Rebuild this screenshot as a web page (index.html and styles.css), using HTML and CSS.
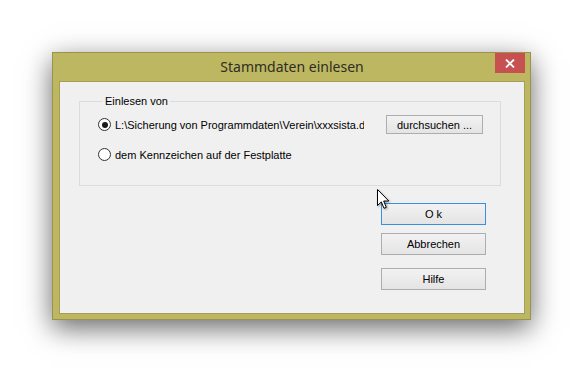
FILE: index.html
```html
<!DOCTYPE html>
<html lang="de">
<head>
  <meta charset="UTF-8" />
  <title>Stammdaten einlesen</title>
  <link rel="stylesheet" href="styles.css">
</head>
<body>
  <div class="window">
    <div class="titlebar">
      <span class="title">Stammdaten einlesen</span>
      <button class="btn-close" type="button">
        <svg width="10" height="9" viewBox="0 0 10 9">
          <path d="M1 0.5 L9 8.5 M9 0.5 L1 8.5" stroke="#fff" stroke-width="1.8" fill="none"/>
        </svg>
      </button>
    </div>
    <div class="client">
      <fieldset class="gruppe">
        <legend>Einlesen von</legend>
        <div class="zeile">
          <span class="radio checked"></span>
          <span class="pfad">L:\Sicherung von Programmdaten\Verein\xxxsista.dat</span>
          <button class="btn btn-suchen" type="button">durchsuchen ...</button>
        </div>
        <div class="zeile zeile-2">
          <span class="radio"></span>
          <span class="text">dem Kennzeichen auf der Festplatte</span>
        </div>
      </fieldset>
      <div class="aktionen">
        <button class="btn btn-ok" type="button">O k</button>
        <button class="btn" type="button">Abbrechen</button>
        <button class="btn btn-hilfe" type="button">Hilfe</button>
      </div>
    </div>
  </div>

  <svg class="cursor" width="13" height="21" viewBox="0 0 13 21">
    <path d="M0.5 0.5 L0.5 16.5 L4.3 12.9 L7 19.3 L9.3 18.3 L6.7 12 L11.8 12 Z" fill="#fff" stroke="#000" stroke-width="1"/>
  </svg>
</body>
</html>
```

FILE: styles.css
```css
* { box-sizing: border-box; }

body {
  margin: 0;
  background: #fff;
  font-family: 'Liberation Sans', Arial, sans-serif;
  font-size: 11px;
  color: #000;
  position: relative;
  min-height: 373px;
  overflow: hidden;
}

.window {
  margin: 52px 0 0 52px;
  width: 479px;
  height: 268px;
  border: 1px solid #9a934f;
  background: #bdb761;
  padding: 0 5px 5px 6px;
  display: flex;
  flex-direction: column;
  box-shadow: 0 8px 26px rgba(0, 0, 0, 0.6);
}

.titlebar {
  position: relative;
  height: 28px;
  display: flex;
  justify-content: center;
  align-items: center;
}

.title {
  font-family: 'Noto Sans', 'Open Sans', sans-serif;
  font-size: 14px;
  color: #2e2e22;
  padding-bottom: 2px;
}

.btn-close {
  position: absolute;
  top: 0;
  right: 0;
  width: 30px;
  height: 20px;
  border: none;
  padding: 0;
  background: #c75050;
  display: flex;
  align-items: center;
  justify-content: center;
}

.client {
  flex: 1;
  background: #f0f0f0;
  border: 1px solid #a59e58;
  padding: 13px 0 0 19px;
}

.gruppe {
  margin: 0;
  width: 422px;
  height: 91px;
  border: 1px solid #dcdcdc;
  padding: 7px 16px 0 18px;
}

.gruppe legend {
  margin-left: 5px;
  padding: 0 2px;
  line-height: 13px;
}

.zeile {
  display: flex;
  align-items: center;
  height: 19px;
}

.zeile-2 {
  margin-top: 11px;
}

.radio {
  width: 13px;
  height: 13px;
  border: 1px solid #333;
  border-radius: 50%;
  background: #fff;
  margin-right: 4px;
  flex-shrink: 0;
  position: relative;
}

.radio.checked::after {
  content: '';
  position: absolute;
  left: 2.5px;
  top: 2.5px;
  width: 6px;
  height: 6px;
  border-radius: 50%;
  background: #1b1b1b;
}

.pfad {
  width: 249px;
  overflow: hidden;
  white-space: nowrap;
  margin-right: 22px;
}

.btn {
  font-family: 'Liberation Sans', Arial, sans-serif;
  font-size: 11px;
  color: #000;
  border: 1px solid #adadad;
  background: linear-gradient(#f2f2f2, #e4e4e4);
  padding: 0;
}

.btn-suchen {
  width: 97px;
  height: 19px;
}

.aktionen {
  display: flex;
  flex-direction: column;
  align-items: flex-end;
  margin: 17px 38px 0 0;
}

.aktionen .btn {
  width: 105px;
  height: 22px;
  margin-bottom: 8px;
}

.aktionen .btn-ok {
  border-color: #3c8ee0;
}

.aktionen .btn-hilfe {
  margin-top: 5px;
}

.cursor {
  position: absolute;
  left: 377px;
  top: 189px;
  filter: drop-shadow(1px 1px 1px rgba(0, 0, 0, 0.35));
}
```
